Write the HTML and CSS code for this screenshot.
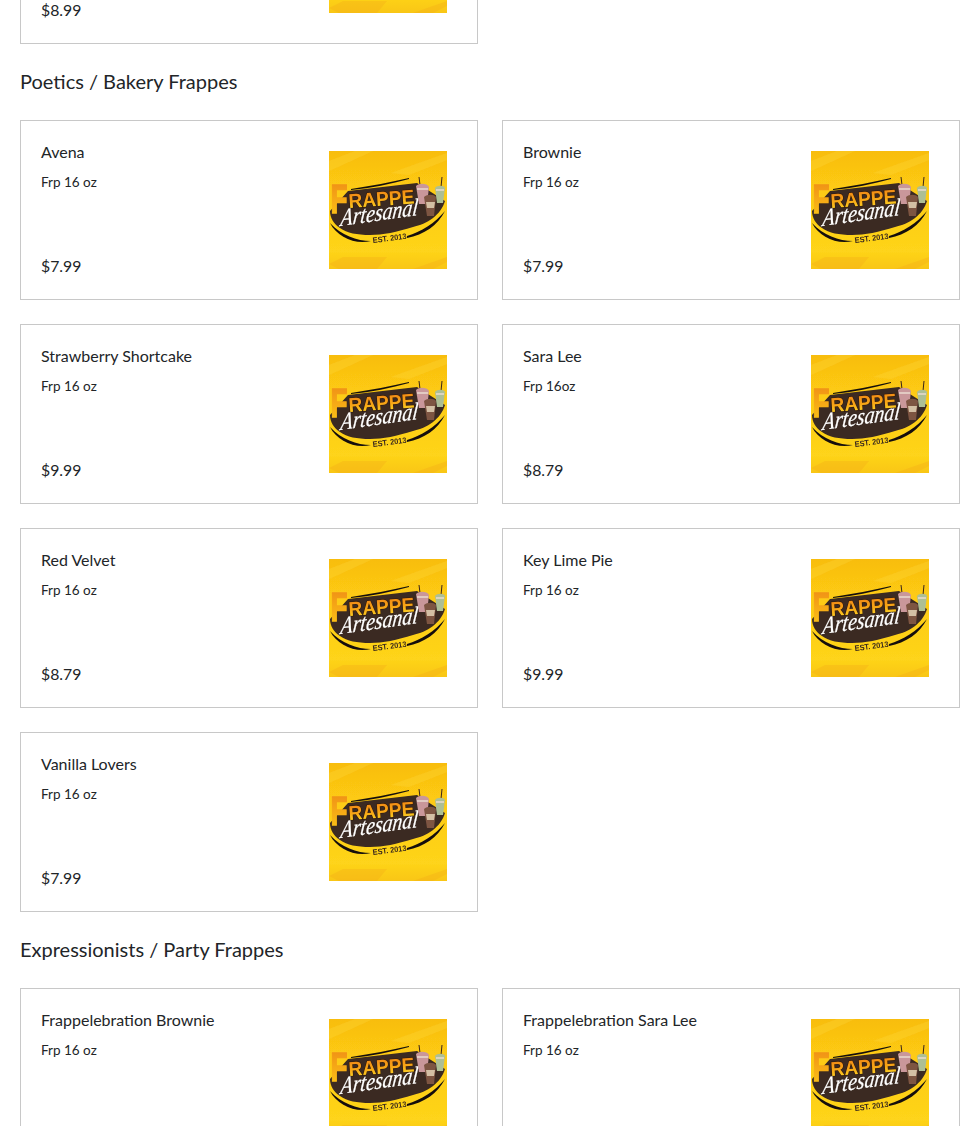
FILE: index.html
```html
<!DOCTYPE html>
<html lang="en">
<head>
<meta charset="utf-8">
<title>Menu</title>
<link rel="stylesheet" href="styles.css">
</head>
<body>
<svg class="defs" width="0" height="0" aria-hidden="true">
  <defs>
    <linearGradient id="bg" x1="0" y1="0" x2="0" y2="1">
      <stop offset="0" stop-color="#f8bd10"/>
      <stop offset=".3" stop-color="#fdca12"/>
      <stop offset=".85" stop-color="#fed41a"/>
      <stop offset="1" stop-color="#f9c614"/>
    </linearGradient>
    <linearGradient id="let" x1="0" y1="0" x2="0" y2="1">
      <stop offset="0" stop-color="#ee7f12"/>
      <stop offset=".55" stop-color="#f7a616"/>
      <stop offset="1" stop-color="#fde02a"/>
    </linearGradient>
    <linearGradient id="fl" x1="0" y1="0" x2="0" y2="1">
      <stop offset="0" stop-color="#ee8812"/>
      <stop offset="1" stop-color="#fdc818"/>
    </linearGradient>
    <filter id="soft" x="0" y="0" width="1" height="1"><feGaussianBlur stdDeviation=".35"/></filter>
    <symbol id="logo" viewBox="0 0 118 118">
      <g filter="url(#soft)">
        <rect width="118" height="118" fill="url(#bg)"/>
        <path d="M0 10 L26 0 H44 L0 20Z M62 22 L118 2 V9 L80 24Z" fill="#ffe04a" opacity=".25"/>
        <path d="M0 113 L14 106 H58 L48 118 H10Z M84 118 L118 106 V111 L104 118Z" fill="#f4ad12" opacity=".35"/>
        <path d="M1 60 L19 40 L88 32 L116 50 C112 64 98 73 84 76 C68 81 54 84 41 84 C28 84 18 82 11 77 C5 73 1 67 1 60Z" fill="#3b2a22"/>
        <path d="M1 72 C12 84 28 90 42 90 C26 94 8 86 1 72Z" fill="#15110c"/>
        <path d="M78 85 C92 81 106 72 116 60 C109 74 95 84 78 87Z" fill="#15110c"/>
        <path d="M22 38 C42 35 62 31 80 27 L80 28 C62 33 42 37 22 39Z" fill="#15110c"/>
        <text class="logo-f" x="1.500" y="62" textLength="17" lengthAdjust="spacingAndGlyphs" fill="url(#fl)" stroke="url(#fl)" stroke-width="1.400">F</text>
        <text class="logo-rappe" transform="translate(20 57) rotate(-4)" textLength="66" lengthAdjust="spacingAndGlyphs" fill="url(#let)" stroke="#2e1606" stroke-width="1" paint-order="stroke">RAPPE</text>
        <text class="logo-script" transform="translate(11 75) rotate(-8) skewX(-14)" textLength="78" lengthAdjust="spacingAndGlyphs" fill="#fff" stroke="#fff" stroke-width=".25">Artesanal</text>
        <text class="logo-est" transform="translate(44 92) rotate(-7)" textLength="34" lengthAdjust="spacingAndGlyphs" fill="#3b2a1c">EST. 2013</text>
        <path d="M90 26 L91 34 M113 26 L112 36" stroke="#3a2418" stroke-width="1"/>
        <path d="M87 35 C90 32 98 32 100 36 L98 53 L90 53Z" fill="#c9979a"/>
        <path d="M106 37 C108 34 115 34 116 37 L114 52 L108 52Z" fill="#adbf95"/>
        <path d="M95 46 C98 43 105 43 107 46 L105 65 L98 65Z" fill="#7d5442"/>
        <path d="M97 51 H106 L105 57 H98Z" fill="#d3bfa4"/>
        <path d="M88 38 L99 38 M107 39 L115 39" stroke="#eadccf" stroke-width="1.500"/>
      </g>
    </symbol>
  </defs>
</svg>
<main class="menu">
  <section class="grid">
    <article class="card">
      <div class="info"><h3 class="name">Frappe</h3><p class="desc">Frp 16 oz</p><p class="price">$8.99</p></div>
      <svg class="thumb"><use href="#logo"/></svg>
    </article>
  </section>
  <h2 class="heading">Poetics / Bakery Frappes</h2>
  <section class="grid">
    <article class="card"><div class="info"><h3 class="name">Avena</h3><p class="desc">Frp 16 oz</p><p class="price">$7.99</p></div><svg class="thumb"><use href="#logo"/></svg></article>
    <article class="card"><div class="info"><h3 class="name">Brownie</h3><p class="desc">Frp 16 oz</p><p class="price">$7.99</p></div><svg class="thumb"><use href="#logo"/></svg></article>
    <article class="card"><div class="info"><h3 class="name">Strawberry Shortcake</h3><p class="desc">Frp 16 oz</p><p class="price">$9.99</p></div><svg class="thumb"><use href="#logo"/></svg></article>
    <article class="card"><div class="info"><h3 class="name">Sara Lee</h3><p class="desc">Frp 16oz</p><p class="price">$8.79</p></div><svg class="thumb"><use href="#logo"/></svg></article>
    <article class="card"><div class="info"><h3 class="name">Red Velvet</h3><p class="desc">Frp 16 oz</p><p class="price">$8.79</p></div><svg class="thumb"><use href="#logo"/></svg></article>
    <article class="card"><div class="info"><h3 class="name">Key Lime Pie</h3><p class="desc">Frp 16 oz</p><p class="price">$9.99</p></div><svg class="thumb"><use href="#logo"/></svg></article>
    <article class="card"><div class="info"><h3 class="name">Vanilla Lovers</h3><p class="desc">Frp 16 oz</p><p class="price">$7.99</p></div><svg class="thumb"><use href="#logo"/></svg></article>
  </section>
  <h2 class="heading">Expressionists / Party Frappes</h2>
  <section class="grid">
    <article class="card"><div class="info"><h3 class="name">Frappelebration Brownie</h3><p class="desc">Frp 16 oz</p><p class="price">$9.99</p></div><svg class="thumb"><use href="#logo"/></svg></article>
    <article class="card"><div class="info"><h3 class="name">Frappelebration Sara Lee</h3><p class="desc">Frp 16 oz</p><p class="price">$9.99</p></div><svg class="thumb"><use href="#logo"/></svg></article>
  </section>
</main>
</body>
</html>
```
FILE: styles.css
```css
html, body {
  margin: 0;
  height: 100%;
  overflow: hidden;
  background: #fff;
}
body {
  font-family: Lato, "Open Sans", sans-serif;
  color: #222528;
}
.defs {
  display: block;
  height: 0;
}
.menu {
  margin-top: -136px;
  padding: 0 5px 0 20px;
}
.grid {
  display: grid;
  grid-template-columns: 1fr 1fr;
  gap: 24px;
}
.heading {
  margin: 23px 0 25px;
  font-size: 20px;
  line-height: 28px;
  font-weight: 400;
}
.card {
  display: flex;
  justify-content: space-between;
  box-sizing: border-box;
  height: 180px;
  padding: 30px 30px 30px 20px;
  border: 1px solid #c8c8c8;
  background: #fff;
}
.info {
  display: flex;
  flex-direction: column;
  margin: -11px 0 -9px;
}
.name {
  margin: 0;
  font-size: 16px;
  line-height: 24px;
  font-weight: 400;
}
.desc {
  margin: 8px 0 0;
  font-size: 13.500px;
  line-height: 20px;
}
.price {
  margin: auto 0 0;
  font-size: 15.800px;
  line-height: 24px;
}
.thumb {
  flex: none;
  width: 118px;
  height: 118px;
}
.logo-f {
  font: 700 41px "Liberation Sans", sans-serif;
}
.logo-rappe {
  font: 700 20px "Liberation Sans", sans-serif;
}
.logo-script {
  font: italic 400 24px "Liberation Serif", serif;
}
.logo-est {
  font: 700 8px "Liberation Sans", sans-serif;
}
```
